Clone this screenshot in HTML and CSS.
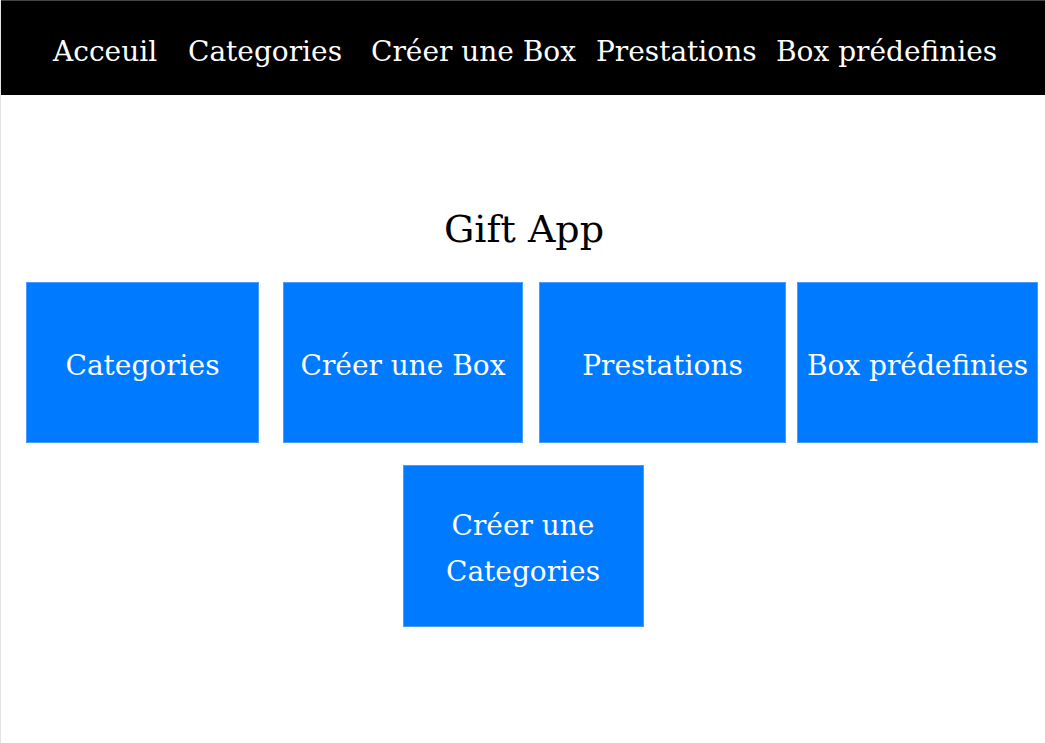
FILE: index.html
```html
<!DOCTYPE html>
<html lang="fr">
<head>
<meta charset="utf-8">
<title>Gift App</title>
<link rel="stylesheet" href="styles.css">
</head>
<body>
<nav class="topnav">
  <a class="navlink nl-1" href="#">Acceuil</a>
  <a class="navlink nl-2" href="#">Categories</a>
  <a class="navlink nl-3" href="#">Créer une Box</a>
  <a class="navlink nl-4" href="#">Prestations</a>
  <a class="navlink nl-5" href="#">Box prédefinies</a>
</nav>
<main class="content">
  <h1 class="title">Gift App</h1>
  <div class="tiles">
    <a class="tile t-1" href="#">Categories</a>
    <a class="tile t-2" href="#">Créer une Box</a>
    <a class="tile t-3" href="#">Prestations</a>
    <a class="tile t-4" href="#">Box prédefinies</a>
  </div>
  <div class="tiles tiles-second">
    <a class="tile t-5" href="#">Créer une Categories</a>
  </div>
</main>
</body>
</html>
```
FILE: styles.css
```css
html, body {
  margin: 0;
  padding: 0;
  background: #ffffff;
}
body {
  font-family: "DejaVu Serif", "Liberation Serif", serif;
  border-left: 1px solid #e4e4e4;
  min-height: 743px;
  box-sizing: border-box;
}
.topnav {
  background: #000;
  border-top: 1px solid #444;
  height: 95px;
  box-sizing: border-box;
  display: flex;
  align-items: center;
  padding-left: 52px;
  padding-top: 6px;
}
.navlink {
  color: #fff;
  text-decoration: none;
  font-size: 28px;
  flex: none;
  white-space: nowrap;
}
.nl-1 { width: 135px; }
.nl-2 { width: 183px; }
.nl-3 { width: 225px; }
.nl-4 { width: 180px; }
.content {
  display: flex;
  flex-direction: column;
  align-items: stretch;
}
.title {
  margin: 110px 0 0;
  text-align: center;
  font-weight: normal;
  font-size: 38px;
  line-height: 48px;
  color: #000;
  padding-left: 2px;
}
.tiles {
  display: flex;
  margin-top: 29px;
  padding-left: 25px;
}
.tile {
  background: #007bff;
  color: #fff;
  text-decoration: none;
  height: 161px;
  display: flex;
  align-items: center;
  justify-content: center;
  text-align: center;
  font-size: 28px;
  line-height: 46px;
  box-sizing: border-box;
  border: 1px solid #4a9bff;
  padding-top: 6px;
}
.t-1 { width: 233px; margin-right: 24px; }
.t-2 { width: 240px; margin-right: 16px; }
.t-3 { width: 247px; margin-right: 11px; }
.t-4 { width: 241px; }
.tiles-second {
  justify-content: center;
  margin-top: 22px;
  padding-left: 0;
}
.t-5 { width: 241px; height: 162px; padding: 6px 30px 0; }
```
